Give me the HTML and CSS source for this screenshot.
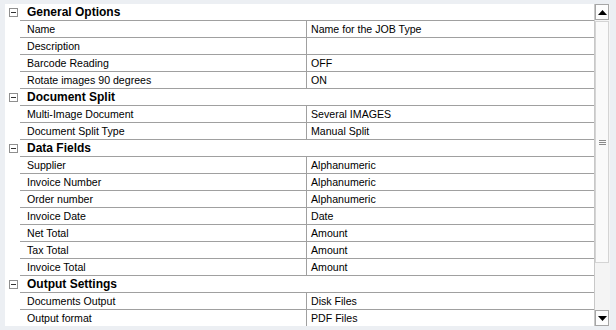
FILE: index.html
```html
<!DOCTYPE html>
<html lang="en">
<head>
    <meta charset="UTF-8">
    <title>Job Type Properties</title>
    <link rel="stylesheet" href="styles.css">
</head>
<body>
    <div class="frame">
        <div class="grid">
            <div class="cat"><span class="toggle"></span>General Options</div>
            <div class="row"><span class="name">Name</span><span class="value">Name for the JOB Type</span></div>
            <div class="row"><span class="name">Description</span><span class="value"></span></div>
            <div class="row"><span class="name">Barcode Reading</span><span class="value">OFF</span></div>
            <div class="row"><span class="name">Rotate images 90 degrees</span><span class="value">ON</span></div>

            <div class="cat"><span class="toggle"></span>Document Split</div>
            <div class="row"><span class="name">Multi-Image Document</span><span class="value">Several IMAGES</span></div>
            <div class="row"><span class="name">Document Split Type</span><span class="value">Manual Split</span></div>

            <div class="cat"><span class="toggle"></span>Data Fields</div>
            <div class="row"><span class="name">Supplier</span><span class="value">Alphanumeric</span></div>
            <div class="row"><span class="name">Invoice Number</span><span class="value">Alphanumeric</span></div>
            <div class="row"><span class="name">Order number</span><span class="value">Alphanumeric</span></div>
            <div class="row"><span class="name">Invoice Date</span><span class="value">Date</span></div>
            <div class="row"><span class="name">Net Total</span><span class="value">Amount</span></div>
            <div class="row"><span class="name">Tax Total</span><span class="value">Amount</span></div>
            <div class="row"><span class="name">Invoice Total</span><span class="value">Amount</span></div>

            <div class="cat"><span class="toggle"></span>Output Settings</div>
            <div class="row"><span class="name">Documents Output</span><span class="value">Disk Files</span></div>
            <div class="row"><span class="name">Output format</span><span class="value">PDF Files</span></div>
        </div>
        <div class="scrollbar">
            <div class="sb-btn"><svg width="9" height="5" viewBox="0 0 9 5"><polygon points="0,5 9,5 4.5,0" fill="#000"/></svg></div>
            <div class="sb-track">
                <div class="sb-thumb">
                    <span class="grip"></span><span class="grip"></span><span class="grip"></span>
                </div>
            </div>
            <div class="sb-btn"><svg width="9" height="5" viewBox="0 0 9 5"><polygon points="0,0 9,0 4.5,5" fill="#000"/></svg></div>
        </div>
    </div>
</body>
</html>
```

FILE: styles.css
```css
body {
    margin: 0;
    background: #eceff3;
    font-family: "Liberation Sans", Arial, sans-serif;
    font-size: 10.6px;
    color: #000;
    height: 330px;
    overflow: hidden;
}
.frame {
    display: flex;
    padding: 4px 6px 0 5px;
    height: 322px;
}
.grid {
    flex: 1;
    background: #fff;
    overflow: hidden;
}
.cat {
    height: 16px;
    display: flex;
    align-items: center;
    font-weight: bold;
    font-size: 12px;
    border-bottom: 1px solid #a0a0a0;
    margin-left: 15px;
    padding-left: 7px;
    position: relative;
}
.cat .toggle {
    position: absolute;
    left: -11px;
    top: 4px;
    width: 7px;
    height: 7px;
    border: 1px solid #8f8f8f;
    background: #fff;
}
.cat .toggle::after {
    content: "";
    position: absolute;
    left: 1px;
    top: 3px;
    width: 5px;
    height: 1px;
    background: #333;
}
.row {
    height: 16px;
    display: flex;
    border-bottom: 1px solid #a0a0a0;
    margin-left: 15px;
}
.name {
    width: 279px;
    padding-left: 7px;
    line-height: 17px;
    border-right: 1px solid #a0a0a0;
}
.value {
    padding-left: 4px;
    line-height: 17px;
}
.scrollbar {
    width: 15px;
    display: flex;
    flex-direction: column;
    background: #f4f4f4;
    border-left: 1px solid #c8c8c8;
}
.sb-btn {
    height: 16px;
    width: 14px;
    border: 1px solid #a6a6a6;
    background: #fdfdfd;
    display: flex;
    align-items: center;
    justify-content: center;
    box-sizing: border-box;
}
.sb-track {
    flex: 1;
    padding: 1px 0;
}
.sb-thumb {
    height: 242px;
    width: 14px;
    box-sizing: border-box;
    border: 1px solid #d4d4d4;
    background: #fafafa;
    display: flex;
    flex-direction: column;
    align-items: center;
    justify-content: center;
    gap: 1px;
}
.grip {
    width: 7px;
    height: 1px;
    background: #8a8a8a;
}
```
